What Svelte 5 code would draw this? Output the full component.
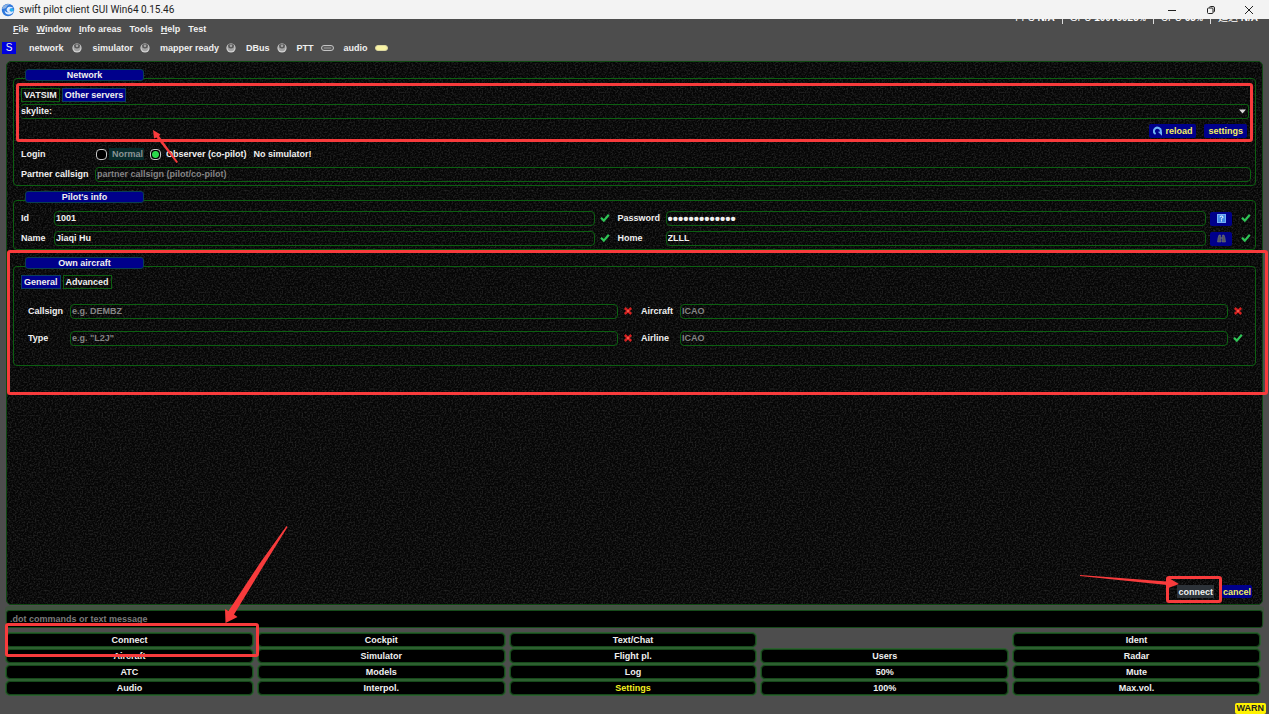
<script>
  const menus = [
    { key: 'F', rest: 'ile' },
    { key: 'W', rest: 'indow' },
    { key: 'I', rest: 'nfo areas' },
    { key: '', rest: 'Tools' },
    { key: 'H', rest: 'elp' },
    { key: '', rest: 'Test' }
  ];
  const lamps = ['network', 'simulator', 'mapper ready', 'DBus'];
  const actions = [
    ['Connect', 'Cockpit', 'Text/Chat', '', 'Ident'],
    ['Aircraft', 'Simulator', 'Flight pl.', 'Users', 'Radar'],
    ['ATC', 'Models', 'Log', '50%', 'Mute'],
    ['Audio', 'Interpol.', 'Settings', '100%', 'Max.vol.']
  ];
  let login = $state('observer');
</script>

{#snippet tick()}
  <svg class="mark" width="10" height="10" viewBox="0 0 10 10" role="img" aria-label="valid">
    <path d="M1 4.800 L3.800 7.600 L8.800 1.800" fill="none" stroke="#2fc556" stroke-width="2.200" />
  </svg>
{/snippet}

{#snippet cross()}
  <svg class="mark" width="10" height="10" viewBox="0 0 10 10" role="img" aria-label="invalid">
    <path d="M1.800 2 L8.200 8 M8.200 2 L1.800 8" stroke="#d42222" stroke-width="2.400" />
    <rect x="4" y="4" width="2" height="2" fill="#ee5a4a" />
  </svg>
{/snippet}

<div class="window">
  <header class="titlebar">
    <svg width="14" height="14" viewBox="0 0 14 14" aria-hidden="true">
      <circle cx="7" cy="7" r="6.200" fill="#2e78dc" />
      <path d="M2 3.500 Q5 0 9 1.200 Q5.500 2.500 5 5 Q3 6 1 6 Z" fill="#8fb2e0" />
      <path d="M12.600 5 Q8 2.600 6 5.200 Q4.600 8 8 9.600 Q5 9.800 3.600 7.600 Q4 12 8.500 11.500 Q12.500 10.500 12.600 7.500 Q10 9.500 8.600 7.500 Q8.200 5 12.600 5 Z" fill="#dcecff" />
      <path d="M9 5.500 Q12 5 13 7 Q12 9 9.800 8.200 Q8.200 7 9 5.500Z" fill="#28b4f0" />
    </svg>
    <span class="caption">swift pilot client GUI Win64 0.15.46</span>
    <button class="win" aria-label="Minimize"><svg width="10" height="10" viewBox="0 0 10 10"><path d="M1 5.500H9" stroke="#222" /></svg></button>
    <button class="win" aria-label="Restore"><svg width="10" height="10" viewBox="0 0 10 10"><path d="M3.500 2.500Q3.500 1.500 4.500 1.500H7Q8.500 1.500 8.500 3V6Q8.500 7 7.500 7" fill="none" stroke="#222" /><rect x="1.500" y="3" width="5.500" height="5.500" rx="1" fill="none" stroke="#222" /></svg></button>
    <button class="win" aria-label="Close"><svg width="10" height="10" viewBox="0 0 10 10"><path d="M1 1L9 9M9 1L1 9" stroke="#222" /></svg></button>
  </header>

  <nav class="menubar">
    {#each menus as m}
      <button><u>{m.key}</u>{m.rest}</button>
    {/each}
    <div class="meter">
      <span>FPS <b>N/A</b></span><i></i>
      <span>GPU <b>10075923<small> %</small></b></span><i></i>
      <span>CPU <b>65<small> %</small></b></span><i></i>
      <span>延迟 <b>N/A</b></span>
    </div>
  </nav>

  <div class="lamps">
    <span class="badge">S</span>
    {#each lamps as l}
      <span class="lamp">{l}
        <svg width="10" height="10" viewBox="0 0 10 10" aria-hidden="true">
          <circle cx="5" cy="5" r="4.600" fill="#d2d2d2" />
          <circle cx="5" cy="4.600" r="3.600" fill="#a2a2a2" />
          <path d="M2 1.800Q5 .2 8 1.800L7.600 4.600Q5 6.400 2.400 4.600Z" fill="#585858" />
          <ellipse cx="5" cy="2.800" rx="1.300" ry="1.400" fill="#a4a4a4" />
        </svg>
      </span>
    {/each}
    <span class="lamp">PTT
      <svg width="13" height="6" viewBox="0 0 13 6" aria-hidden="true"><rect x=".5" y=".5" width="12" height="5" rx="2.500" fill="#5c5c5c" stroke="#c4c4c4" /><path d="M3 3H10" stroke="#999" /></svg>
    </span>
    <span class="lamp">audio
      <svg width="13" height="6" viewBox="0 0 13 6" aria-hidden="true"><rect x=".5" y=".5" width="12" height="5" rx="2.500" fill="#f8f3a4" stroke="#dcd7a0" /></svg>
    </span>
  </div>

  <main class="panel">
    <section class="group">
      <h2>Network</h2>
      <div class="servers">
        <div class="tabs" role="tablist">
          <button role="tab" aria-selected="false">VATSIM</button>
          <button role="tab" aria-selected="true" class="on">Other servers</button>
        </div>
        <div class="combo">
          <select aria-label="Server"><option>skylite:</option></select>
          <svg width="7" height="5" viewBox="0 0 7 5" aria-hidden="true"><path d="M0 .5H7L3.500 4.500Z" fill="#d8d8d8" /></svg>
        </div>
        <div class="server-actions">
          <button class="blue">
            <svg width="9" height="10" viewBox="0 0 9 10" aria-hidden="true"><path d="M2.600 8A3.400 3.400 0 1 1 7.600 6.200" fill="none" stroke="#6db4f4" stroke-width="2" /><path d="M4.800 5.800H9V9.800Z" fill="#6db4f4" /></svg>
            reload
          </button>
          <button class="blue">settings</button>
        </div>
        <div class="redbox around-servers"></div>
      </div>
      <div class="login">
        <span class="head">Login</span>
        <label><input type="radio" bind:group={login} value="normal" /><span class="dim">Normal</span></label>
        <label><input type="radio" bind:group={login} value="observer" /><span>Observer (co-pilot)</span></label>
        <span class="nosim">No simulator!</span>
        <svg class="arrow small" width="30" height="36" viewBox="0 0 30 36" aria-hidden="true"><path d="M1 1L8.500 5.500L7 7L26 33L24.500 34L4.500 8.500L2 9.500Z" fill="#f83b3c" /></svg>
      </div>
      <div class="partner">
        <label for="partner">Partner callsign</label>
        <input id="partner" placeholder="partner callsign (pilot/co-pilot)" />
      </div>
    </section>

    <section class="group pilot">
      <h2>Pilot's info</h2>
      <div class="form">
        <label for="pid">Id</label><input id="pid" value="1001" />{@render tick()}
        <label for="pw">Password</label><input id="pw" type="password" value="observer-1001" />
        <div class="tail">
          <button class="blue" aria-label="Show password"><svg width="9" height="9" viewBox="0 0 9 9"><rect x=".5" y=".5" width="8" height="8" fill="#438be6" stroke="#76b0f5" /><path d="M3 3.200Q3 2 4.500 2Q6 2 6 3.200Q6 4 4.500 4.600V5.500M4.500 6.300V7.400" fill="none" stroke="#fff" /></svg></button>
          {@render tick()}
        </div>
        <label for="pname">Name</label><input id="pname" value="Jiaqi Hu" />{@render tick()}
        <label for="home">Home</label><input id="home" value="ZLLL" />
        <div class="tail">
          <button class="blue" aria-label="Find airport"><svg width="9" height="9" viewBox="0 0 9 9"><path d="M2 1H3.500L4 8H.5L1 4ZM5.500 1H7L8 4L8.500 8H5Z" fill="#50545e" stroke="#777b84" stroke-width=".5" /><path d="M3.500 4H5.500" stroke="#777b84" /></svg></button>
          {@render tick()}
        </div>
      </div>
    </section>

    <section class="group own">
      <h2>Own aircraft</h2>
      <div class="tabs" role="tablist">
        <button role="tab" aria-selected="true" class="on">General</button>
        <button role="tab" aria-selected="false">Advanced</button>
      </div>
      <div class="form">
        <label for="cs">Callsign</label><input id="cs" placeholder="e.g. DEMBZ" />{@render cross()}
        <label for="ac">Aircraft</label><input id="ac" placeholder="ICAO" />{@render cross()}
        <label for="ty">Type</label><input id="ty" placeholder={'e.g. "L2J"'} />{@render cross()}
        <label for="al">Airline</label><input id="al" placeholder="ICAO" />{@render tick()}
      </div>
      <div class="redbox around-own"></div>
    </section>

    <div class="confirm">
      <button class="go">connect</button>
      <button class="blue">cancel</button>
      <div class="redbox around-go"></div>
      <svg class="arrow wide" width="100" height="18" viewBox="0 0 100 18" aria-hidden="true"><path d="M0 0L87 6.500L88 2.500L99 9L87 13.500L87 10L0 1Z" fill="#f83b3c" /></svg>
    </div>
  </main>

  <input class="command" aria-label="Command" placeholder=".dot commands or text message" />

  <div class="actions">
    {#each actions.flat() as a}
      {#if a}
        <div class="cell">
          <button class:yellow={a === 'Settings'}>{a}</button>
          {#if a === 'Connect'}
            <div class="redbox around-connect"></div>
            <svg class="arrow long" width="64" height="98" viewBox="0 0 64 98" aria-hidden="true"><path d="M62.500 0L36 37L4.500 85L1 83L1.500 97L13.500 91L10 88.500L40 39L63.500 1Z" fill="#f83b3c" /></svg>
          {/if}
        </div>
      {:else}
        <div></div>
      {/if}
    {/each}
  </div>

  <footer><span>WARN</span></footer>
</div>

<style>
  :global(body) {
    margin: 0;
    background: #4d4d4d;
  }
  .window {
    display: flex;
    flex-direction: column;
    min-height: 100vh;
    box-sizing: border-box;
    overflow: hidden;
    background: #4d4d4d;
    color: #f0f0f0;
    font: bold 9px/12px "Liberation Sans", Arial, sans-serif;
  }
  button, input, select {
    font: inherit;
    color: inherit;
    margin: 0;
    padding: 0;
    border: 0;
    background: none;
    box-sizing: border-box;
    border-radius: 0;
  }
  svg { display: block; flex: none; }

  .titlebar {
    display: flex;
    align-items: center;
    height: 19px;
    padding-left: 1px;
    background: #f3f3f3;
    color: #222;
    font: 10px/19px Roboto, "Open Sans", sans-serif;
  }
  .caption { flex: 1; padding-left: 4px; }
  .win {
    width: 39px;
    height: 19px;
    display: grid;
    place-items: center;
  }
  .win:last-child { padding-right: 2px; }

  .menubar {
    position: relative;
    display: flex;
    gap: 8px;
    height: 20px;
    padding-left: 13px;
    align-items: center;
    overflow: hidden;
  }
  .meter {
    position: absolute;
    right: 11px;
    top: -7px;
    display: flex;
    align-items: center;
    gap: 7px;
    color: #fff;
    font: 10px/12px "Liberation Sans", "Noto Sans CJK SC", sans-serif;
  }
  .meter span { height: 12px; }
  .meter small { font-size: 8px; }
  .meter i { width: 1px; height: 11px; background: #ddd; }

  .lamps {
    display: flex;
    align-items: center;
    height: 18px;
    gap: 10px;
  }
  .badge {
    width: 14px;
    margin: 0 3px 0 2px;
    text-align: center;
    background: #0000e0;
    font-weight: normal;
    font-size: 10px;
  }
  .lamp { display: flex; align-items: center; gap: 7px; }
  .badge + .lamp { gap: 8px; margin-right: 1px; }

  .panel {
    flex: 1;
    display: flex;
    flex-direction: column;
    margin: 4px 6px 0;
    padding: 16px 6px 6px;
    border: 1px solid #0f4a12;
    border-radius: 5px;
    background-color: #050505;
    background-image: url("data:image/svg+xml,%3Csvg xmlns='http://www.w3.org/2000/svg' width='200' height='200'%3E%3Cfilter id='n'%3E%3CfeTurbulence type='fractalNoise' baseFrequency='.6' numOctaves='2' stitchTiles='stitch'/%3E%3CfeColorMatrix values='0 0 0 0 1 0 0 0 0 1 0 0 0 0 1 .3 0 0 0 -.12'/%3E%3C/filter%3E%3Crect width='200' height='200' filter='url(%23n)'/%3E%3C/svg%3E");
  }
  .group {
    position: relative;
    padding: 0 4px 3px 7px;
    border: 1px solid #0c5f11;
    border-radius: 4px;
  }
  .pilot { margin-top: 14px; }
  .own { margin-top: 16px; padding-bottom: 19px; }
  h2 {
    width: 119px;
    height: 12px;
    margin: -10px 0 0 4px;
    box-sizing: border-box;
    border: 1px solid #0b3f50;
    border-radius: 3px;
    background: #00008b;
    font: inherit;
    line-height: 11px;
    text-align: center;
  }
  .tabs { display: flex; gap: 2px; }
  .tabs button {
    height: 14px;
    padding: 0 2px;
    border: 1px solid #0c5f11;
  }
  .tabs .on { background: #00008b; border-color: #0b3f60; }
  .blue { background: #00008b; border-radius: 2px; }

  .servers { position: relative; margin: 7px 2px 0 0; }
  .combo { position: relative; margin-top: 2px; }
  .combo select {
    display: block;
    width: 100%;
    height: 15px;
    padding-bottom: 1px;
    appearance: none;
    border: 1px solid #0c5f11;
    border-left: 0;
    border-radius: 3px;
  }
  .combo svg { position: absolute; right: 3px; top: 5px; }
  .server-actions {
    display: flex;
    justify-content: flex-end;
    gap: 8px;
    margin-top: 5px;
    padding-right: 2px;
    color: #f4f060;
  }
  .server-actions button {
    display: flex;
    align-items: center;
    gap: 3px;
    height: 14px;
    padding: 0 4px;
  }

  .login {
    position: relative;
    display: flex;
    align-items: center;
    height: 14px;
    margin-top: 9px;
  }
  .head { width: 75px; }
  .login label { display: flex; align-items: center; gap: 2px; margin-right: 6px; }
  .login label span { padding: 0 1px 0 3px; }
  .login .dim { background: #082b2b; color: #8a9494; }
  .login input {
    appearance: none;
    width: 11px;
    height: 11px;
    border: 1px solid #c8c8c8;
    border-radius: 4px;
    background: #000;
  }
  .login input:checked { background: radial-gradient(circle, #2bd94c 0 3px, #000 4px); }

  .partner { display: flex; align-items: center; margin-top: 6px; }
  .partner label { width: 74px; }
  .partner input { flex: 1; }
  .partner label, .form label { padding-bottom: 1px; }
  .partner input, .form input {
    height: 15px;
    min-width: 0;
    padding: 0 1px 1px;
    border: 1px solid #0c5f11;
    border-radius: 4px;
  }
  .form input[type="password"] { font-size: 15px; }
  input::placeholder { color: #858585; opacity: 1; }

  .form {
    display: grid;
    align-items: center;
  }
  .mark { justify-self: center; padding: 0 3px 1px 0; }
  .pilot .form {
    grid-template-columns: 33px 1fr 23px 48px 1fr 45px;
    row-gap: 5px;
    margin-top: 8px;
  }
  .tail { display: flex; align-items: center; justify-content: space-between; padding-left: 4px; }
  .tail .mark { padding-right: 0; }
  .tail button {
    display: grid;
    place-items: center;
    width: 22px;
    height: 14px;
  }
  .own .tabs { margin: 6px 0 15px; }
  .own .form {
    grid-template-columns: 42px 1fr 23px 39px 1fr 23px;
    row-gap: 12px;
    margin-left: 7px;
  }

  .confirm {
    position: relative;
    display: flex;
    align-items: center;
    justify-content: flex-end;
    gap: 8px;
    margin-top: auto;
    padding-right: 4px;
  }
  .confirm button { height: 13px; padding: 0 1px; }
  .confirm .go { background: #2c3238; }
  .confirm .blue { color: #f4f060; }

  .command {
    height: 18px;
    margin: 5px 6px 0;
    padding: 0 3px;
    border: 1px solid #164a1a;
    border-radius: 3px;
    background: #000;
    box-shadow: 0 -3px 0 1px #40543f;
  }
  .command::placeholder { color: #7a7a7a; }

  .actions {
    display: grid;
    grid-template-columns: repeat(5, 1fr);
    gap: 2px 5px;
    margin: 5px 9px 0 6px;
  }
  .cell { position: relative; }
  .cell button {
    display: block;
    width: 100%;
    height: 14px;
    border: 1px solid #17491b;
    border-radius: 4px;
    background: #000;
    box-shadow: 0 0 0 1px #2d5f30;
  }
  .cell .yellow { color: #f4f020; }

  footer { display: flex; justify-content: flex-end; margin-top: auto; padding: 8px 3px 0 0; }
  footer span {
    padding: 0 2px;
    line-height: 11px;
    border-radius: 2px;
    background: #fff200;
    color: #222;
  }

  /* Red guide marks lie above the controls they point at */
  .redbox {
    position: absolute;
    z-index: 2;
    border: 3px solid #f83b3c;
    border-radius: 3px;
    pointer-events: none;
  }
  .around-servers { inset: -5px -4px -4px -5px; }
  .around-own { inset: -17px -13px -30px -7px; }
  .around-go { right: 34px; top: -9px; width: 50px; height: 21px; }
  .around-connect { inset: -10px -6px -10px -1px; }
  .arrow { position: absolute; z-index: 3; pointer-events: none; }
  .small { left: 131px; top: -18px; }
  .wide { right: 76px; top: -10px; }
  .long { right: -35px; top: -107px; }
</style>
